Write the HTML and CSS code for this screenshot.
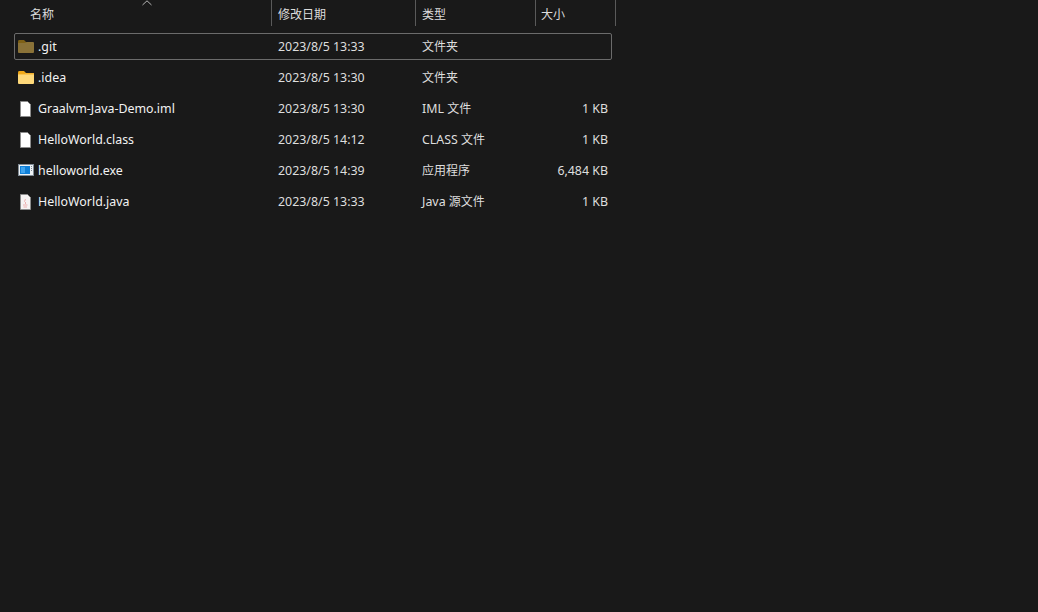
FILE: index.html
```html
<!DOCTYPE html>
<html lang="zh-CN">
<head>
<meta charset="utf-8">
<title>Explorer</title>
<link rel="stylesheet" href="styles.css">
</head>
<body>
<div class="list">
  <div class="header">
    <div class="hcol hname">名称
      <svg class="sort" width="10" height="6" viewBox="0 0 10 6"><path d="M.5 5 5 .8 9.500 5" fill="none" stroke="#b5b5b5" stroke-width="1"/></svg>
    </div>
    <div class="hcol hdate">修改日期</div>
    <div class="hcol htype">类型</div>
    <div class="hcol hsize">大小</div>
  </div>
  <div class="rows">
    <div class="row selected">
      <div class="name"><svg class="icon" width="18" height="16" viewBox="0 0 18 16"><path d="M0 2.500Q0 1 1 1h5l2 2v1H0z" fill="#7d6016"/><path d="M0 4h7l1.500-1H15q1 0 1 1v9q0 1-1 1H1q-1 0-1-1z" fill="#8a7238"/></svg><span>.git</span></div>
      <div class="date">2023/8/5 13:33</div><div class="type"><span class="cjk">文件夹</span></div><div class="size"></div>
    </div>
    <div class="row">
      <div class="name"><svg class="icon" width="18" height="16" viewBox="0 0 18 16"><path d="M0 2.500Q0 1 1 1h5l2 2v1H0z" fill="#f0a818"/><path d="M0 4h7l1.500-1H15q1 0 1 1v9q0 1-1 1H1q-1 0-1-1z" fill="#fdd87a"/><path d="M0 4h7l1.500-1H15q1 0 1 1v.6H0z" fill="#f2b02c"/></svg><span>.idea</span></div>
      <div class="date">2023/8/5 13:30</div><div class="type"><span class="cjk">文件夹</span></div><div class="size"></div>
    </div>
    <div class="row">
      <div class="name"><svg class="icon" width="18" height="16" viewBox="0 0 18 16"><path d="M2.500.5h7l3 3v12h-10z" fill="#fff" stroke="#8c8c8c"/></svg><span>Graalvm-Java-Demo.iml</span></div>
      <div class="date">2023/8/5 13:30</div><div class="type">IML <span class="cjk">文件</span></div><div class="size">1 KB</div>
    </div>
    <div class="row">
      <div class="name"><svg class="icon" width="18" height="16" viewBox="0 0 18 16"><path d="M2.500.5h7l3 3v12h-10z" fill="#fff" stroke="#8c8c8c"/></svg><span>HelloWorld.class</span></div>
      <div class="date">2023/8/5 14:12</div><div class="type">CLASS <span class="cjk">文件</span></div><div class="size">1 KB</div>
    </div>
    <div class="row">
      <div class="name"><svg class="icon" width="18" height="16" viewBox="0 0 18 16"><rect y="1" width="16" height="12" fill="#7f8a94"/><rect x="1" y="2" width="14" height="10" fill="#eef2f5"/><rect x="2" y="3" width="10" height="8" fill="#0f7fd8"/><rect x="3" y="4" width="4" height="6" fill="#3da3ee"/><path d="M13 3h1v1h-1zM13 5h1v1h-1zM13 7h1v1h-1z" fill="#7f8a94"/></svg><span>helloworld.exe</span></div>
      <div class="date">2023/8/5 14:39</div><div class="type"><span class="cjk">应用程序</span></div><div class="size">6,484 KB</div>
    </div>
    <div class="row">
      <div class="name"><svg class="icon" width="18" height="16" viewBox="0 0 18 16"><path d="M2.500.5h7l3 3v12h-10z" fill="#f6f2f2" stroke="#8c8c8c"/><path d="M7.500 5 6.500 7.500l1.500 1.500-1 1M5 11h4.500M5.500 13h3.500" fill="none" stroke="#eeb0b0" stroke-width="1"/></svg><span>HelloWorld.java</span></div>
      <div class="date">2023/8/5 13:33</div><div class="type">Java <span class="cjk">源文件</span></div><div class="size">1 KB</div>
    </div>
  </div>
</div>
</body>
</html>
```
FILE: styles.css
```css
html, body {
  margin: 0;
  height: 100%;
  background: #191919;
}
body {
  color: #ececec;
  font-family: "Noto Sans", "Noto Sans CJK SC", sans-serif;
  font-size: 12.4px;
  overflow: hidden;
}
.cjk {
  font-size: 12px;
}
.list {
  width: 616px;
}
.header {
  display: grid;
  grid-template-columns: 272px 144px 120px 80px;
  height: 26px;
  font-size: 12px;
}
.hcol {
  position: relative;
  display: flex;
  align-items: center;
  box-sizing: border-box;
  border-right: 1px solid #5a5a5a;
  padding: 2px 0 0 6px;
  color: #dcdcdc;
}
.hname {
  padding-left: 30px;
}
.hsize {
  padding-left: 5px;
}
.sort {
  position: absolute;
  left: 142px;
  top: 0;
}
.rows {
  display: flex;
  flex-direction: column;
  gap: 4px;
  padding: 7px 0 0 14px;
}
.row {
  display: grid;
  grid-template-columns: 258px 144px 120px 1fr;
  align-items: center;
  width: 598px;
  height: 27px;
  box-sizing: border-box;
  border: 1px solid transparent;
  border-radius: 2px;
}
.row.selected {
  border-color: #6b6b6b;
}
.name {
  display: flex;
  align-items: center;
  padding-left: 3px;
  gap: 2px;
  color: #f2f2f2;
}
.icon {
  flex: none;
}
.date {
  padding-left: 5px;
  color: #dedede;
}
.type {
  padding: 0 0 2px 5px;
  color: #dedede;
}
.size {
  text-align: right;
  padding-right: 3px;
  color: #dedede;
}
```
